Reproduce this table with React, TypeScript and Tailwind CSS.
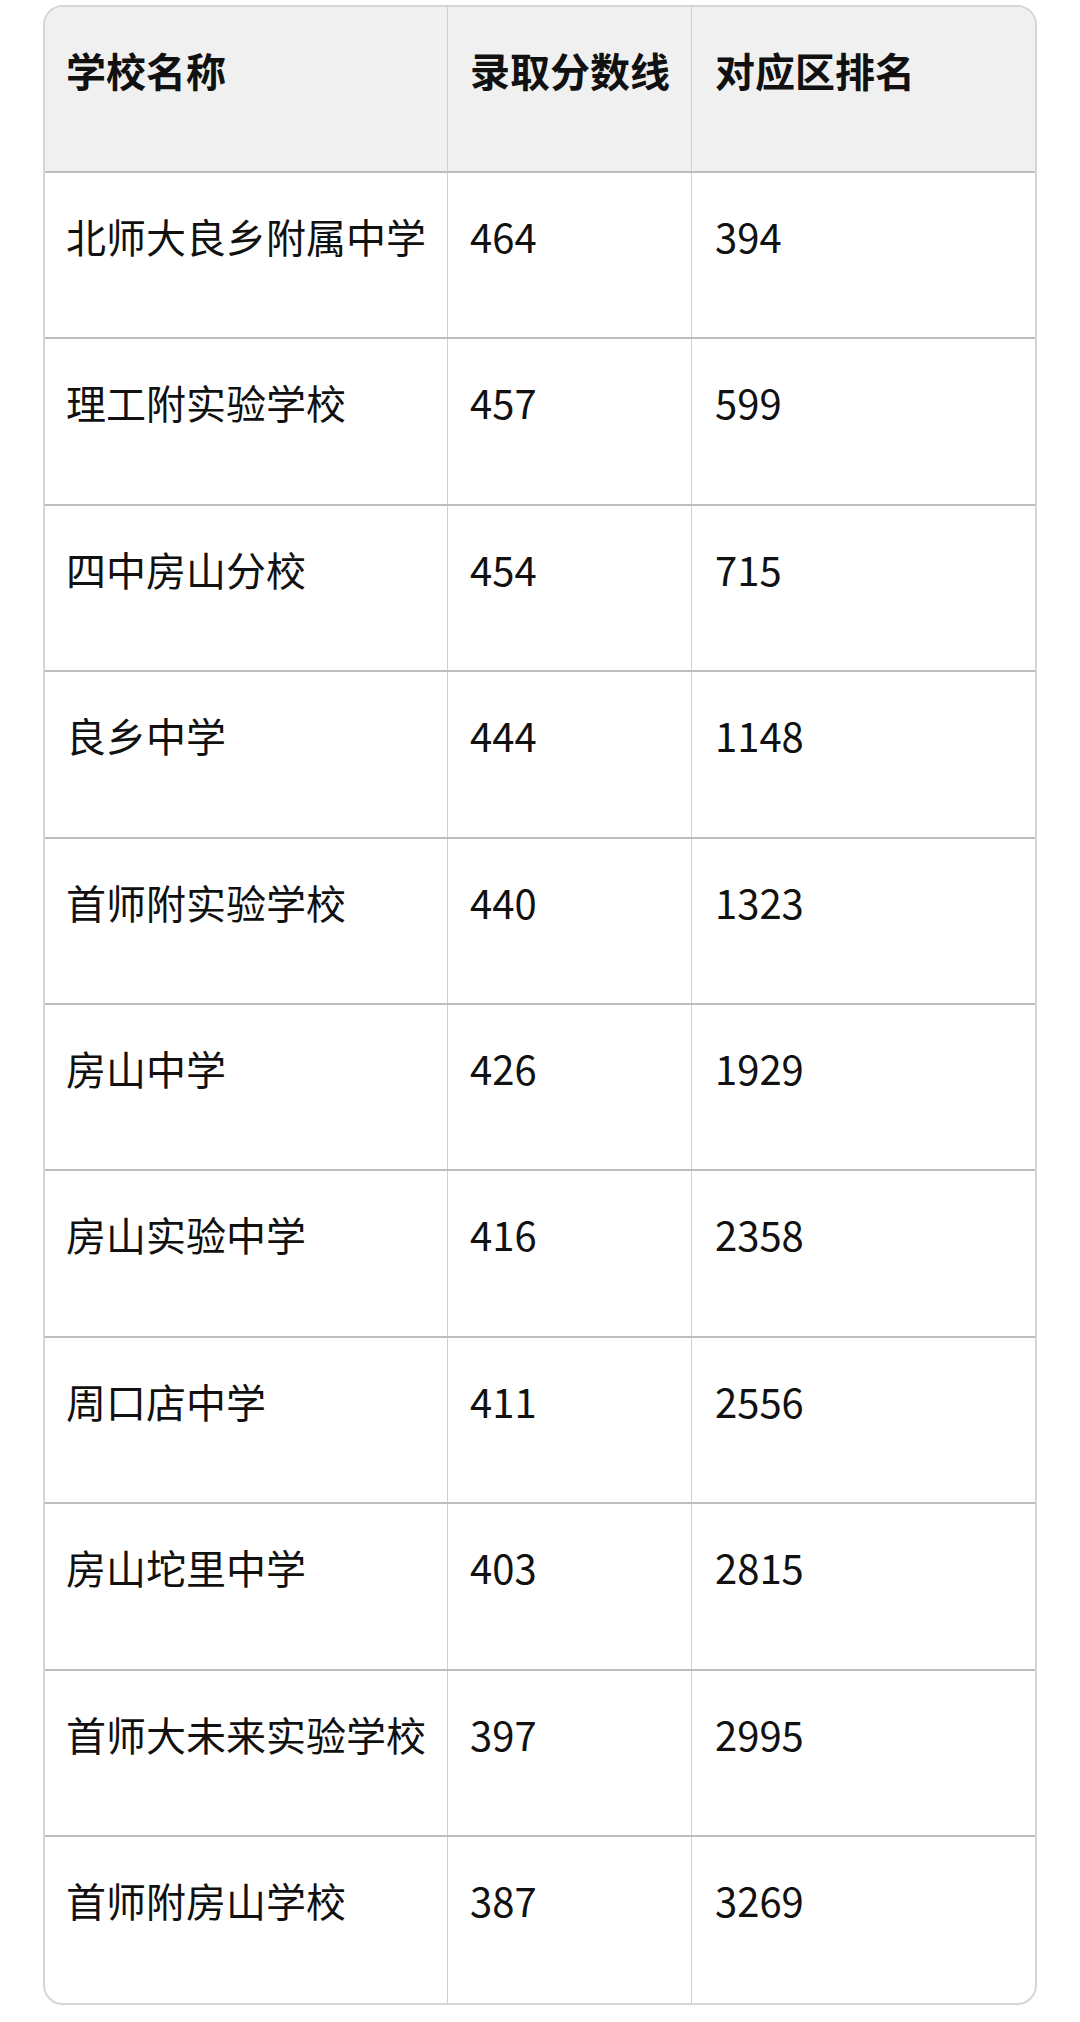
const rows = [
  ["北师大良乡附属中学", "464", "394"],
  ["理工附实验学校", "457", "599"],
  ["四中房山分校", "454", "715"],
  ["良乡中学", "444", "1148"],
  ["首师附实验学校", "440", "1323"],
  ["房山中学", "426", "1929"],
  ["房山实验中学", "416", "2358"],
  ["周口店中学", "411", "2556"],
  ["房山坨里中学", "403", "2815"],
  ["首师大未来实验学校", "397", "2995"],
  ["首师附房山学校", "387", "3269"],
];

function Row({ cells, head, last }: { cells: string[]; head?: boolean; last?: boolean }) {
  return (
    <div
      className={`flex flex-row ${head ? "h-[166px] bg-[#f0f0f0] font-bold" : "h-[166.4px]"} ${
        last ? "" : "border-b-2 border-[#bdbdbd]"
      }`}
    >
      <div className="w-[403px] shrink-0 border-r border-[#cfcfcf] pl-[21px] pt-[33px]">{cells[0]}</div>
      <div className="w-[244px] shrink-0 border-r border-[#cfcfcf] pl-[22px] pt-[33px]">{cells[1]}</div>
      <div className="flex-1 pl-[23px] pt-[33px]">{cells[2]}</div>
    </div>
  );
}

export default function App() {
  return (
    <div className="w-[1080px] h-[2022px] bg-white pt-[5px] pl-[43px]">
      <div
        className="w-[994px] border-2 border-[#d6d6d6] rounded-[20px] overflow-hidden text-[40px] text-[#111]"
        style={{ fontFamily: '"Noto Sans CJK SC", "Noto Sans", sans-serif' }}
      >
        <Row cells={["学校名称", "录取分数线", "对应区排名"]} head />
        {rows.map((r, i) => (
          <Row key={i} cells={r} last={i === rows.length - 1} />
        ))}
      </div>
    </div>
  );
}
